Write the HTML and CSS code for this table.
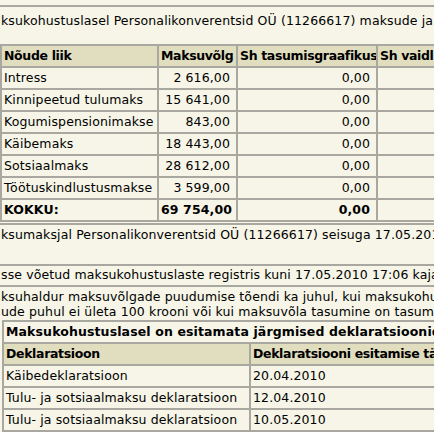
FILE: index.html
```html
<!DOCTYPE html>
<html>
<head>
<meta charset="utf-8">
<link rel="stylesheet" href="styles.css">
</head>
<body>
<div class="page">
  <div class="block first">
    <p class="line">ksukohustuslasel Personalikonverentsid OÜ (11266617) maksude ja maksete võlad</p>
    <table class="grid debts">
      <colgroup><col class="c1"><col class="c2"><col class="c3"><col class="c4"></colgroup>
      <tr><th>Nõude liik</th><th>Maksuvõlg</th><th>Sh tasumisgraafikus</th><th>Sh vaidlustatud</th></tr>
      <tr><td>Intress</td><td class="num">2 616,00</td><td class="num">0,00</td><td></td></tr>
      <tr><td>Kinnipeetud tulumaks</td><td class="num">15 641,00</td><td class="num">0,00</td><td></td></tr>
      <tr><td>Kogumispensionimakse</td><td class="num">843,00</td><td class="num">0,00</td><td></td></tr>
      <tr><td>Käibemaks</td><td class="num">18 443,00</td><td class="num">0,00</td><td></td></tr>
      <tr><td>Sotsiaalmaks</td><td class="num">28 612,00</td><td class="num">0,00</td><td></td></tr>
      <tr><td>Töötuskindlustusmakse</td><td class="num">3 599,00</td><td class="num">0,00</td><td></td></tr>
      <tr class="total"><td>KOKKU:</td><td class="num">69 754,00</td><td class="num">0,00</td><td></td></tr>
    </table>
  </div>
  <div class="block second">
    <p class="line">ksumaksjal Personalikonverentsid OÜ (11266617) seisuga 17.05.2010</p>
  </div>
  <div class="block third">
    <p class="line">sse võetud maksukohustuslaste registris kuni 17.05.2010 17:06 kajastatud andmed</p>
  </div>
  <div class="block fourth">
    <p class="line">ksuhaldur maksuvõlgade puudumise tõendi ka juhul, kui maksukohustuslasel</p>
    <p class="line">ude puhul ei ületa 100 krooni või kui maksuvõla tasumine on tasumisgraafikus</p>
    <table class="grid decl">
      <colgroup><col class="d1"><col class="d2"></colgroup>
      <tr><td colspan="2" class="cap">Maksukohustuslasel on esitamata järgmised deklaratsioonid</td></tr>
      <tr><th>Deklaratsioon</th><th>Deklaratsiooni esitamise tähtaeg</th></tr>
      <tr><td>Käibedeklaratsioon</td><td>20.04.2010</td></tr>
      <tr><td>Tulu- ja sotsiaalmaksu deklaratsioon</td><td>12.04.2010</td></tr>
      <tr><td>Tulu- ja sotsiaalmaksu deklaratsioon</td><td>10.05.2010</td></tr>
    </table>
  </div>
</div>
</body>
</html>
```

FILE: styles.css
```css
html, body {
  margin: 0;
  padding: 0;
  background: #f6f5e7;
  overflow: hidden;
}
body {
  font-family: "DejaVu Sans", Verdana, sans-serif;
  font-size: 12.5px;
  letter-spacing: 0.12px;
  color: #000;
}
.page {
  width: 700px;
  padding-top: 5px;
}
.block {
  border-top: 2px solid #a8a8a0;
}
.line {
  margin: 0;
  white-space: nowrap;
  padding: 6px 0 0 1px;
  height: 16px;
  line-height: 16px;
}
.first .line {
  height: 31px;
}
.second {
  margin-top: 1px;
  height: 39px;
}
.second .line {
  padding-top: 2px;
}
.third {
  height: 19px;
}
.third .line {
  padding-top: 1px;
}
.fourth .line {
  padding-top: 2px;
  height: 15px;
  line-height: 15px;
}
.fourth .line + .line {
  padding-top: 0;
}
.grid {
  border-collapse: collapse;
  table-layout: fixed;
  background: #f6f5e7;
}
.grid td, .grid th {
  border: 2px solid #a8a8a0;
  height: 18px;
  padding: 1px 2px;
  text-align: left;
  white-space: nowrap;
  overflow: hidden;
  line-height: 18px;
}
.grid th {
  background: #e1ddbf;
  font-weight: bold;
  letter-spacing: -0.35px;
}
.debts {
  width: 700px;
}
.c1 { width: 157px; }
.c2 { width: 79px; }
.c3 { width: 140px; }
.c4 { width: 324px; }
.num { text-align: right !important; padding-right: 6px !important; }
.total td { font-weight: bold; }
.decl {
  margin: 1px 0 0 2px;
  width: 600px;
}
.d1 { width: 247px; }
.d2 { width: 353px; }
.cap { font-weight: bold; }
```
